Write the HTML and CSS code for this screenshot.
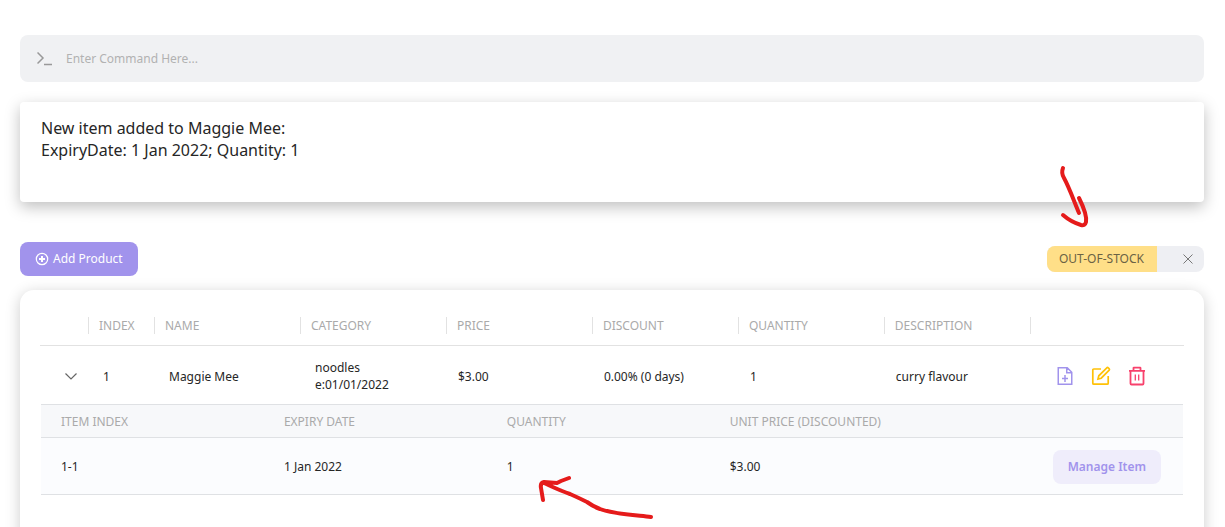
FILE: index.html
```html
<!DOCTYPE html>
<html lang="en">
<head>
<meta charset="utf-8">
<title>Inventory</title>
<link rel="stylesheet" href="styles.css">
</head>
<body>
<main class="page">
  <label class="command">
    <svg class="command-icon" width="16" height="14" viewBox="0 0 16 14" aria-hidden="true"><path d="M.5.500l5.500 5.500-5.500 5.500M7 12.500h8" fill="none" stroke="#999" stroke-width="1.500"/></svg>
    <input class="command-input" type="text" placeholder="Enter Command Here..." aria-label="Command">
  </label>

  <section class="message">New item added to Maggie Mee:<br>ExpiryDate: 1 Jan 2022; Quantity: 1</section>

  <div class="toolbar">
    <button class="btn btn-primary" type="button">
      <svg width="14" height="14" viewBox="0 0 14 14" fill="none" stroke="#fff" aria-hidden="true"><circle cx="7" cy="7" r="5.700" stroke-width="1.200"/><path d="M7 4v6M4 7h6" stroke-width="2"/></svg>
      Add Product
    </button>
    <div class="filter">
      <span class="filter-name">OUT-OF-STOCK</span>
      <button class="filter-close" type="button" aria-label="Clear filter">
        <svg width="10" height="10" viewBox="0 0 10 10" aria-hidden="true"><path d="M.5.5l9 9M9.500.5l-9 9" stroke="#777" fill="none"/></svg>
      </button>
    </div>
  </div>

  <section class="card">
    <table class="products">
      <colgroup><col class="col-toggle"><col class="col-index"><col class="col-data"><col class="col-data"><col class="col-data"><col class="col-data"><col class="col-data"><col class="col-data"><col></colgroup>
      <thead>
        <tr>
          <td></td>
          <th><span>INDEX</span></th><th><span>NAME</span></th><th><span>CATEGORY</span></th><th><span>PRICE</span></th><th><span>DISCOUNT</span></th><th><span>QUANTITY</span></th><th><span>DESCRIPTION</span></th>
          <th><span></span></th>
        </tr>
      </thead>
      <tbody>
        <tr class="product">
          <td class="toggle-cell"><button class="icon-btn" type="button" aria-label="Collapse"><svg width="12" height="7" viewBox="0 0 12 7" aria-hidden="true"><path d="M.5.5L6 6 11.500.5" fill="none" stroke="#666" stroke-width="1.200"/></svg></button></td>
          <td class="wide">1</td>
          <td class="wide">Maggie Mee</td>
          <td class="wide">noodles<br>e:01/01/2022</td>
          <td>$3.00</td>
          <td>0.00% (0 days)</td>
          <td>1</td>
          <td>curry flavour</td>
          <td class="actions-cell">
            <div class="actions">
              <button class="icon-btn" type="button" aria-label="Add item"><svg width="18" height="20" viewBox="0 0 18 20" fill="none" stroke="#a193ec" stroke-width="1.500" aria-hidden="true"><path d="M2.250 1.750h9l4.500 4.500v12H2.250zM10.750 2v4.750h5M9 9v7M6 12.500h6"/></svg></button>
              <button class="icon-btn" type="button" aria-label="Edit product"><svg width="20" height="20" viewBox="0 0 20 20" fill="none" stroke="#ffc107" stroke-width="1.700" aria-hidden="true"><path d="M10 3H2.800Q1.800 3 1.800 4v13.200q0 1 1 1h13.400q1 0 1-1V10"/><path d="M7 13l.8-3.200 8-8q.8-.6 1.500 0l.9.9q.6.8 0 1.500l-8 8z"/></svg></button>
              <button class="icon-btn" type="button" aria-label="Delete product"><svg width="18" height="20" viewBox="0 0 18 20" fill="none" stroke="#f8416c" stroke-width="1.800" aria-hidden="true"><path d="M1 4.800h16M5.500 4.500V2q0-.4.400-.4h6.200q.4 0 .4.400v2.500M2.500 5v12.500q0 1 1 1h11q1 0 1-1V5"/><path d="M7.300 8.500v6M10.700 8.500v6" stroke-width="1.300"/></svg></button>
            </div>
          </td>
        </tr>
        <tr>
          <td class="nested" colspan="9">
            <table class="items">
              <colgroup><col class="col-item"><col class="col-item"><col class="col-item"><col class="col-item"><col></colgroup>
              <thead><tr><th>ITEM INDEX</th><th>EXPIRY DATE</th><th>QUANTITY</th><th>UNIT PRICE (DISCOUNTED)</th><td></td></tr></thead>
              <tbody><tr><td>1-1</td><td>1 Jan 2022</td><td>1</td><td>$3.00</td><td class="manage-cell"><button class="btn btn-soft" type="button">Manage Item</button></td></tr></tbody>
            </table>
          </td>
        </tr>
      </tbody>
    </table>
  </section>

  <svg class="arrow arrow-filter" width="40" height="70" viewBox="0 0 40 70" aria-hidden="true"><path d="M8 3Q6 8 9 13C14 22 19 36 24 48M24 33C28 41 32 51 31 57Q30 61 26 60Q16 57 8 50"/></svg>
  <svg class="arrow arrow-quantity" width="122" height="52" viewBox="0 0 122 52" aria-hidden="true"><path d="M32 8L24 11L20 13L7 12Q3 13 4 18L6 30M7 13C18 18 24 21 33 24Q42 28 50 32Q57 37 63 39C76 44 96 45 114 47"/></svg>
</main>
</body>
</html>
```

FILE: styles.css
```css
* { box-sizing: border-box; }

body {
  margin: 0;
  background: #fff;
  color: #262626;
  font-family: "Noto Sans", sans-serif;
  font-size: 12px;
  line-height: 17px;
}

button, input { font: inherit; }
button { cursor: pointer; }
svg { display: block; }

.page {
  position: relative;
  display: flex;
  flex-direction: column;
  height: 100vh;
  padding: 35px 21px 0 20px;
  overflow: hidden;
}

.command {
  display: flex;
  align-items: center;
  gap: 13px;
  flex: none;
  padding: 15px 17px;
  border-radius: 8px;
  background: #f0f1f3;
}
.command-icon { flex: none; }
.command-input {
  flex: 1;
  height: 17px;
  padding: 0;
  border: 0;
  outline: 0;
  background: transparent;
}
.command-input::placeholder { color: #b2b2b2; opacity: 1; }

.message {
  flex: none;
  min-height: 100px;
  margin-top: 20px;
  padding: 15px 21px;
  border-radius: 4px;
  background: #fff;
  box-shadow: 0 5px 15px rgba(0, 0, 0, 0.25);
  font-size: 16px;
  line-height: 22px;
}

.toolbar {
  display: flex;
  align-items: center;
  justify-content: space-between;
  flex: none;
  margin-top: 40px;
}

.btn {
  display: inline-flex;
  align-items: center;
  gap: 4px;
  height: 34px;
  padding: 0 15px;
  border: 0;
  border-radius: 8px;
  line-height: 16px;
}
.btn-primary { background: #a193ec; color: #fff; }
.btn-soft { background: #efedfb; color: #a193ec; font-weight: 600; }

.filter {
  display: flex;
  height: 26px;
  overflow: hidden;
  border-radius: 8px;
  background: #eeeff3;
}
.filter-name {
  padding: 0 13px 0 12px;
  background: #ffdf88;
  color: #6b6244;
  line-height: 25px;
}
.filter-close {
  display: flex;
  align-items: center;
  padding: 0 11px 0 26px;
  border: 0;
  background: transparent;
}

.card {
  flex: 1 0 auto;
  min-height: 320px;
  margin-top: 14px;
  padding: 16px 20px;
  border-radius: 14px;
  background: #fff;
  box-shadow: 0 3px 15px rgba(0, 0, 0, 0.2);
}

table {
  width: 100%;
  border-collapse: separate;
  border-spacing: 0;
  table-layout: fixed;
}
th, td { padding: 0; text-align: left; }
th { color: #aaa; font-weight: 400; }

.col-toggle { width: 48px; }
.col-index { width: 66px; }
.col-data { width: 12.760%; }
.col-item { width: 19.520%; }

.products > thead > tr > * {
  height: 40px;
  border-bottom: 1px solid #e2e2e2;
}
.products > thead span {
  display: block;
  height: 17px;
  padding-left: 10px;
  border-left: 1px solid #e2e2e2;
}

.product > td { height: 58px; padding: 2px 0 0 12px; }
.product > .wide { padding-left: 15px; }
.product > .toggle-cell { padding-left: 25px; }

.icon-btn {
  display: block;
  padding: 0;
  border: 0;
  background: transparent;
}
.product > .actions-cell { padding-right: 38px; }
.actions { display: flex; justify-content: flex-end; gap: 17px; }

.nested { padding: 0 1px; }
.items th, .items td {
  padding-left: 20px;
  border-bottom: 1px solid #dfe1e4;
}
.items thead tr > * {
  height: 34px;
  border-top: 1px solid #dfe1e4;
  background: #f7f8fa;
}
.items tbody td { height: 57px; padding-top: 1px; background: #fbfcfe; }
.items .manage-cell { padding: 1px 22px 0 0; text-align: right; }

/* Hand-drawn annotations over the content */
.arrow {
  position: absolute;
  fill: none;
  stroke: #e51b1b;
  stroke-width: 4px;
  stroke-linecap: round;
  stroke-linejoin: round;
  pointer-events: none;
}
.arrow-filter { top: 165px; right: 130px; }
.arrow-quantity { top: 470px; left: 537px; }
```
